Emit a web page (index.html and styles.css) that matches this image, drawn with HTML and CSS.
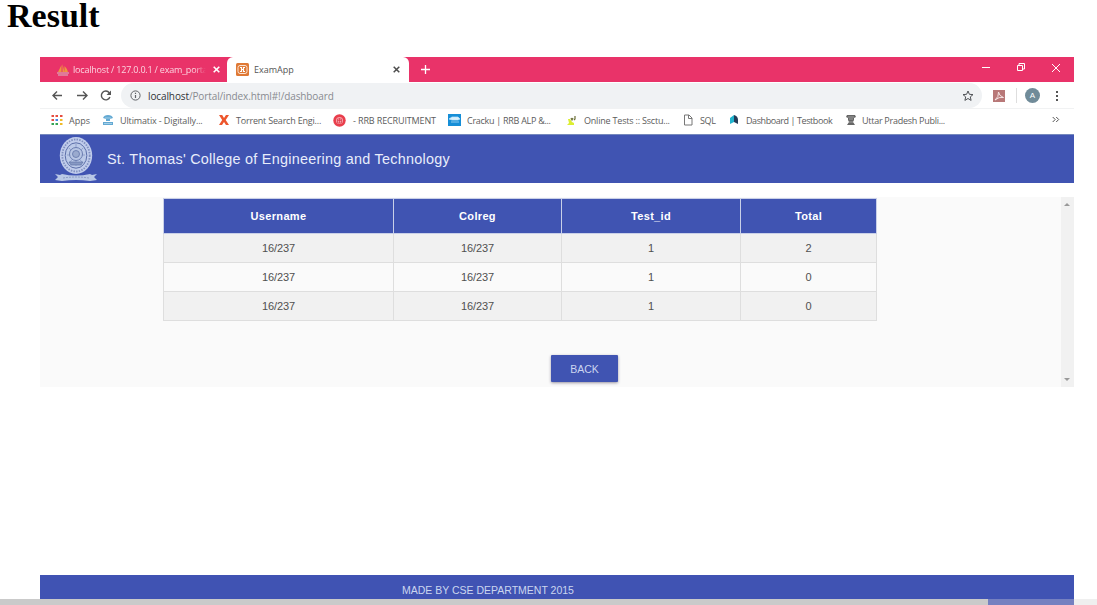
FILE: index.html
```html
<!DOCTYPE html>
<html lang="en">
<head>
<meta charset="utf-8">
<title>Result</title>
<link rel="stylesheet" href="styles.css">
</head>
<body>
<h1 class="title">Result</h1>
<div class="browser">
  <div class="tabs">
    <div class="tab tab-idle">
      <svg class="tab-icon" width="14" height="13" viewBox="0 0 14 13"><path d="M2 9 5.500 2v7zM6.500 9V1q1 4 2 8zM8.500 9V3q3 3 3.500 6z" fill="#ee9540"/><path d="M1 10h12M2 12h10" stroke="#d8c0ca" stroke-width="1.200"/></svg>
      <span class="tab-text idle-text">localhost / 127.0.0.1 / exam_porta</span>
      <svg class="close" width="7" height="7" viewBox="0 0 7 7"><path d="m.7.7 5.600 5.600m0-5.600L.7 6.300" stroke="#fff" stroke-width="1.600"/></svg>
    </div>
    <div class="tab tab-active">
      <svg class="xampp" width="13" height="13" viewBox="0 0 13 13"><rect width="13" height="13" rx="1.500" fill="#df7935"/><rect x="2" y="2.500" width="9" height="8" rx="2" fill="none" stroke="#fbe3d3"/><path d="M4 4.500h1.500v4H4M9 4.500H7.500v4H9M5.500 6.500h2" fill="none" stroke="#fff" stroke-width="1.100"/></svg>
      <span class="tab-text active-text">ExamApp</span>
      <svg class="close" width="7" height="7" viewBox="0 0 7 7"><path d="m.7.7 5.600 5.600m0-5.600L.7 6.300" stroke="#4c4c4c" stroke-width="1.500"/></svg>
    </div>
    <svg class="plus" width="9" height="9" viewBox="0 0 9 9"><path d="M4.500 0v9M0 4.500h9" stroke="#fff" stroke-width="1.300"/></svg>
    <svg class="controls" width="82" height="12" viewBox="0 0 82 12"><path d="M0 5.500h8M35.500 3.500h5v5h-5zM37 3V1.500h5.500V7H41M70 2l8 8m0-8-8 8" stroke="#fff" fill="none"/></svg>
  </div>
  <div class="toolbar">
    <svg class="nav" width="62" height="13" viewBox="0 0 62 13"><g fill="none" stroke="#555" stroke-width="1.400"><path d="M10 6.500H1M5 2.500l-4 4 4 4M25 6.500h10M31 2.500l4 4-4 4M57.300 3.800a4.400 4.400 0 1 0 .6 4.200"/></g><path d="M59 1.500v4.500h-4.500z" fill="#555"/></svg>
    <div class="address">
      <svg class="info" width="11" height="11" viewBox="0 0 11 11"><circle cx="5.500" cy="5.500" r="4.600" fill="none" stroke="#606368"/><path d="M5.500 5v3M5.500 2.700v1.200" stroke="#606368" stroke-width="1.200"/></svg>
      <span class="url"><b>localhost</b>/Portal/index.html#!/dashboard</span>
      <svg class="star" width="12" height="12" viewBox="0 0 12 12"><path d="m6 1 1.400 3.300 3.600.3-2.700 2.300.8 3.500L6 8.500l-3.100 1.900.8-3.500L1 4.600l3.600-.3z" fill="none" stroke="#4f5256"/></svg>
    </div>
    <svg class="pdf" width="12" height="12" viewBox="0 0 12 12"><rect width="12" height="12" fill="#b87878"/><path d="M2 10Q6 7 5.500 2q.5 4 5 5.500Q6 6.500 2 10z" fill="none" stroke="#f6e4e4"/></svg>
    <i class="separator"></i>
    <span class="avatar">A</span>
    <svg class="menu" width="4" height="12" viewBox="0 0 4 12"><path d="M1 1h2v2H1zm0 4h2v2H1zm0 4h2v2H1z" fill="#555"/></svg>
  </div>
  <div class="bookmarks">
    <div class="mark m1"><svg width="12" height="12" viewBox="0 0 12 12"><path d="M.5 1H3v2H.5zM.5 5H3v2H.5z" fill="#e64d40"/><path d="M4.500 1H7v2H4.500zM9 1h2.500v2H9z" fill="#e64d40"/><path d="M.5 9H3v2H.5zM4.500 9H7v2H4.500z" fill="#35a456"/><path d="M4.500 5H7v2H4.500z" fill="#4784e8"/><path d="M9 5h2.500v2H9zM9 9h2.500v2H9z" fill="#efba28"/></svg><span>Apps</span></div>
    <div class="mark m2"><svg width="12" height="12" viewBox="0 0 12 12"><path d="M1 4q1-3 5-3t5 3l-3 1v2H4V5zM1 8h10v3H1z" fill="#63a9d3"/><path d="M3 4h6M2 9.500h8" stroke="#b4d8ec" stroke-width=".8"/></svg><span>Ultimatix - Digitally...</span></div>
    <div class="mark m3"><svg width="12" height="12" viewBox="0 0 12 12"><path d="M1 1h3.200L6 4l2-3h3L7.700 6 11 11H8L6 8l-2 3H1l3.200-5z" fill="#ed562c"/></svg><span>Torrent Search Engi...</span></div>
    <div class="mark m4"><svg width="13" height="13" viewBox="0 0 13 13"><circle cx="6.500" cy="6.500" r="6.200" fill="#e93e4c"/><circle cx="6.500" cy="6.500" r="3.500" fill="#f6a3aa"/><path d="M4.500 5h4v4h-4zM6.500 4v5M4.500 6.500h4" fill="none" stroke="#dc3948" stroke-width=".7"/></svg><span>- RRB RECRUITMENT</span></div>
    <div class="mark m5"><svg width="13" height="12" viewBox="0 0 13 12"><path d="M0 0h13v12H0z" fill="#168ed7"/><path d="m1 5 3-2h6l2 2-2 1H4zM3 8h8" fill="#d9effb" stroke="#bfe5fa" stroke-width=".7"/></svg><span>Cracku | RRB ALP &amp;...</span></div>
    <div class="mark m6"><svg width="12" height="12" viewBox="0 0 12 12"><path d="M2 5h2l2 3 2 1v2H1l2-2z" fill="#dcee32"/><path d="M5 4 6 6l1-2M9 2v3L8 6" fill="none" stroke="#696d35" stroke-width="1.200"/></svg><span>Online Tests :: Ssctu...</span></div>
    <div class="mark m7"><svg width="10" height="12" viewBox="0 0 10 12"><path d="M1.500 1H6l3 3v7H1.500zM5.500 1v3.500H9" fill="none" stroke="#777"/></svg><span>SQL</span></div>
    <div class="mark m8"><svg width="10" height="12" viewBox="0 0 10 12"><path d="M1 10V4l4-3v7z" fill="#20b3cd"/><path d="M5 1q4 1 4 5v4L5 8z" fill="#243b58"/></svg><span>Dashboard | Testbook</span></div>
    <div class="mark m9"><svg width="12" height="12" viewBox="0 0 12 12"><path d="M2 1h8l1 2-2 1v2l-1 2 2 3H2l2-3-1-2V4L1 3z" fill="#666"/><path d="M3 3h6M4 5h4M4 8h4" stroke="#c7c7c7" stroke-width=".6"/></svg><span>Uttar Pradesh Publi...</span></div>
    <svg class="more" width="8" height="8" viewBox="0 0 8 8"><path d="m.7 1 2.500 2.500L.7 6m3.500-5 2.500 2.500L4.200 6" fill="none" stroke="#555"/></svg>
  </div>
  <header class="banner">
    <svg class="crest" width="44" height="46" viewBox="0 0 44 46">
      <ellipse cx="22" cy="19.500" rx="16.200" ry="18.500" fill="#c0cceb"/>
      <ellipse cx="22" cy="19.500" rx="13.700" ry="16" fill="none" stroke="#8191c0" stroke-width="1.800" stroke-dasharray="1.500 1.200"/>
      <ellipse cx="22" cy="19.500" rx="10.800" ry="12.700" fill="#bccae8" stroke="#5c6fa9"/>
      <path d="M22 8v22M13 19h18M15 12l14 15M29 12 15 27" stroke="#7e90bf" stroke-width=".7"/>
      <circle cx="22" cy="18" r="6.500" fill="#b8c6e4" stroke="#6275aa" stroke-width=".9"/><circle cx="22" cy="18" r="3.500" fill="#9aaace" stroke="#6275aa" stroke-width=".8"/><path d="M15 26h14l-2 3H17z" fill="#8799c3" stroke="#6074a8" stroke-width=".7"/>
      <path d="m1 38 5 1 2-1q14 3 28 0l2 1 5-1-3 3 3 3-7 1q-14-2-28 0l-7-1 3-3z" fill="#b9c8e6"/><path d="M9 42q13-2 26 0" fill="none" stroke="#8d9dc6" stroke-dasharray="2 1"/>
    </svg>
    <span class="college">St. Thomas' College of Engineering and Technology</span>
  </header>
  <main class="content">
    <div class="page">
      <table class="results">
        <colgroup><col class="c1"><col class="c2"><col class="c3"><col class="c4"></colgroup>
        <thead><tr><th>Username</th><th>Colreg</th><th>Test_id</th><th>Total</th></tr></thead>
        <tbody>
          <tr><td>16/237</td><td>16/237</td><td>1</td><td>2</td></tr>
          <tr><td>16/237</td><td>16/237</td><td>1</td><td>0</td></tr>
          <tr><td>16/237</td><td>16/237</td><td>1</td><td>0</td></tr>
        </tbody>
      </table>
      <button class="back">BACK</button>
    </div>
    <div class="scroll"><i class="up"></i><i class="down"></i></div>
  </main>
  <footer class="footer">MADE BY CSE DEPARTMENT 2015</footer>
</div>
<div class="bottom-scroll"><i class="thumb"></i><i class="tint"></i></div>
</body>
</html>
```
FILE: styles.css
```css
* { box-sizing: border-box; }
body { margin: 0; height: 605px; overflow: hidden; background: #fff; display: flex; flex-direction: column; font-family: "Liberation Sans", Arial, sans-serif; }
svg { display: block; flex: none; }
.title { margin: 0; height: 57px; flex: none; padding-left: 7px; font: bold 34px/32px "Liberation Serif", serif; color: #000; }
.browser { width: 1034px; height: 542px; flex: none; margin-left: 40px; display: flex; flex-direction: column; }
.tabs { height: 25px; flex: none; background: #e93369; display: flex; align-items: center; }
.tab { height: 25px; display: flex; align-items: center; font-family: "Open Sans", sans-serif; font-size: 9.5px; white-space: nowrap; }
.tab-idle { width: 187px; padding-left: 16px; color: #fbd3df; }
.tab-active { width: 182px; padding-left: 9px; background: #fff; border-radius: 6px 6px 0 0; color: #555; }
.tab-text { flex: none; }
.idle-text { width: 133px; margin: 0 6px 0 3px; font-size: 9px; letter-spacing: -.2px; overflow: hidden; -webkit-mask-image: linear-gradient(90deg, #000 122px, transparent); mask-image: linear-gradient(90deg, #000 122px, transparent); }
.active-text { width: 138px; margin-left: 5px; font-size: 9px; }
.close { margin-left: 1px; }
.plus { margin-left: 12px; }
.controls { margin: 0 10px 4px auto; }
.toolbar { height: 27px; flex: none; display: flex; align-items: center; border-bottom: 1px solid #f1f2f3; padding-top: 1px; }
.nav { margin-left: 12px; }
.address { height: 25px; width: 861px; margin-left: 7px; padding-left: 9px; border-radius: 13px; background: #f0f2f4; display: flex; align-items: center; }
.url { margin-left: 7px; font: 10px "Open Sans", sans-serif; color: #888b90; letter-spacing: -.11px; }
.url b { font-weight: 400; color: #303236; }
.star { margin-left: auto; margin-right: 8px; }
.pdf { margin-left: 11px; }
.separator { width: 1px; height: 15px; background: #dedede; margin-left: 11px; }
.avatar { width: 15px; height: 15px; margin-left: 8px; border-radius: 50%; background: #708b99; color: #fff; font-size: 8px; line-height: 15px; text-align: center; }
.menu { margin-left: 15px; }
.bookmarks { height: 26px; flex: none; display: flex; align-items: center; padding: 0 14px 3px 11px; border-bottom: 1px solid #7588bd; font: 9px "Open Sans", sans-serif; color: #5c5c5c; }
.mark { display: flex; align-items: center; flex: none; white-space: nowrap; }
.mark span { margin-left: auto; flex: none; }
.m1 { width: 51px; } .m1 span { width: 33px; }
.m2 { width: 116px; } .m2 span { width: 98px; letter-spacing: -.13px; }
.m3 { width: 115px; } .m3 span { width: 97px; letter-spacing: -.2px; }
.m4 { width: 115px; } .m4 span { width: 95px; letter-spacing: -.13px; }
.m5 { width: 118px; } .m5 span { width: 99px; letter-spacing: -.28px; }
.m6 { width: 117px; } .m6 span { width: 99px; letter-spacing: -.2px; }
.m7 { width: 46px; } .m7 span { width: 29px; letter-spacing: -.4px; }
.m8 { width: 116px; } .m8 span { width: 99px; letter-spacing: -.42px; }
.m9 { width: 120px; } .m9 span { width: 103px; letter-spacing: -.27px; }
.more { margin-left: auto; }
.banner { height: 48px; flex: none; background: #4054b2; display: flex; align-items: center; }
.crest { margin-left: 14px; }
.college { margin-left: 9px; font-size: 14.4px; color: #e8edfb; letter-spacing: .26px; }
.content { height: 190px; flex: none; margin-top: 14px; background: #fafafa; display: flex; }
.page { width: 1021px; display: flex; flex-direction: column; padding-top: 1px; }
.results { width: 714px; margin-left: 123px; table-layout: fixed; border-collapse: collapse; font-size: 11px; color: #505050; text-align: center; }
.c1 { width: 230px; } .c2 { width: 168px; } .c3 { width: 179px; } .c4 { width: 136px; }
th, td { padding: 0; border: 1px solid #dedede; }
th { height: 35px; background: #4054b2; color: #fff; letter-spacing: .32px; border-color: #c9d0e8; }
td { height: 29px; padding-bottom: 1px; letter-spacing: -.1px; }
tbody tr:nth-child(odd) { background: #f1f1f1; }
.back { width: 67px; height: 27px; margin: 34px 0 0 511px; border: 0; border-radius: 1px; padding: 0; background: #4054b2; color: #ccd5f0; font: 10.5px "Liberation Sans", sans-serif; box-shadow: 0 1px 3px #9995a1; }
.scroll { width: 13px; background: #f1f1f1; display: flex; flex-direction: column; justify-content: space-between; align-items: center; padding: 6px 1px 6px 0; }
.up, .down { border: 3px solid transparent; }
.up { border-top: 0; border-bottom-color: #999; }
.down { border-bottom: 0; border-top-color: #999; }
.footer { height: 24px; flex: none; margin-top: auto; background: #4053b3; padding: 1px 0 0 362px; font-size: 10.5px; line-height: 29px; color: #cbd6ef; white-space: nowrap; }
.bottom-scroll { height: 6px; flex: none; background: #efefef; display: flex; }
.thumb { width: 988px; background: #cacaca; }
.tint { width: 86px; background: #7580c0; }
```
